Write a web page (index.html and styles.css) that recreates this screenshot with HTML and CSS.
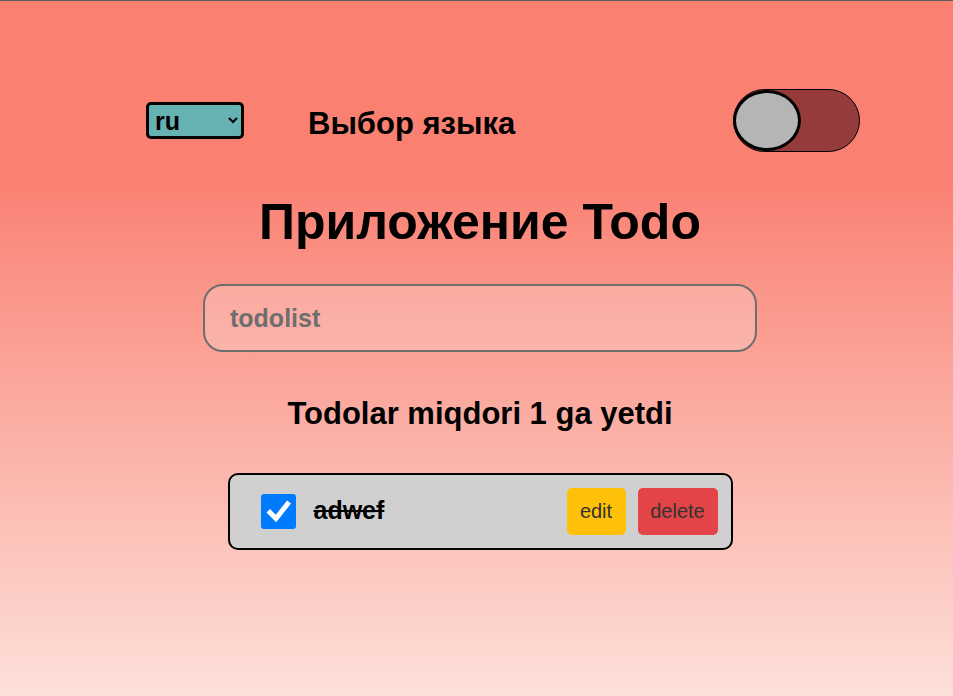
FILE: index.html
```html
<!DOCTYPE html>
<html lang="ru">
<head>
<meta charset="utf-8">
<title>Приложение Todo</title>
<link rel="stylesheet" href="styles.css">
</head>
<body>
<div class="app">
  <header class="header">
    <select class="lang-select">
      <option>ru</option>
      <option>uz</option>
      <option>en</option>
    </select>
    <span class="lang-label">Выбор языка</span>
    <div class="toggle"><span class="knob"></span></div>
  </header>
  <h1 class="title">Приложение Todo</h1>
  <input class="todo-input" type="text" placeholder="todolist">
  <p class="count">Todolar miqdori 1 ga yetdi</p>
  <ul class="todo-list">
    <li class="todo-item">
      <span class="check"><svg viewBox="0 0 35 35" width="35" height="35"><path d="M9 18.5 L15 24.5 L26.5 10" fill="none" stroke="#fff" stroke-width="5" stroke-linecap="square"/></svg></span>
      <span class="todo-text">adwef</span>
      <button class="btn btn-edit">edit</button>
      <button class="btn btn-delete">delete</button>
    </li>
  </ul>
</div>
</body>
</html>
```
FILE: styles.css
```css
html, body {
  margin: 0;
  padding: 0;
}
body {
  min-height: 100vh;
  box-sizing: border-box;
  border-top: 1px solid #5c5c5c;
  background: linear-gradient(180deg, #fa8072 0%, #fa8072 25%, #fde0da 100%);
  font-family: "Liberation Sans", Arial, sans-serif;
  color: #000;
}
.app {
  display: flex;
  flex-direction: column;
  align-items: center;
  padding-left: 7px;
}
.header {
  align-self: stretch;
  display: flex;
  align-items: center;
  height: 63px;
  margin-top: 88px;
  padding: 0 93px 0 139px;
}
.lang-select {
  width: 98px;
  height: 37px;
  box-sizing: border-box;
  border: 3px solid #000;
  border-radius: 5px;
  background-color: #66b2b2;
  font-family: "Liberation Sans", Arial, sans-serif;
  font-weight: bold;
  font-size: 25px;
  color: #000;
  padding: 0 2px;
}
.lang-label {
  margin-left: 64px;
  margin-top: 7px;
  font-size: 31px;
  font-weight: bold;
}
.toggle {
  position: relative;
  margin-left: auto;
  width: 127px;
  height: 63px;
  box-sizing: border-box;
  border: 1px solid #000;
  border-radius: 32px;
  background: #953b3b;
}
.knob {
  position: absolute;
  left: -1px;
  top: 0px;
  width: 68px;
  height: 61px;
  box-sizing: border-box;
  border: 3px solid #000;
  border-radius: 50%;
  background: #b5b5b5;
}
.title {
  margin: 42px 0 0;
  font-size: 50px;
  font-weight: bold;
  line-height: 56px;
}
.todo-input {
  margin-top: 34px;
  width: 554px;
  height: 68px;
  box-sizing: border-box;
  border: 2px solid #6e6e6e;
  border-radius: 20px;
  background: rgba(255, 255, 255, 0.2);
  padding: 0 25px;
  font-family: "Liberation Sans", Arial, sans-serif;
  font-size: 25px;
  font-weight: bold;
  color: #333;
  outline: none;
}
.todo-input::placeholder {
  color: #6e6e6e;
}
.count {
  margin: 45px 0 0;
  font-size: 31px;
  font-weight: bold;
  line-height: 34px;
}
.todo-list {
  list-style: none;
  margin: 42px 0 0;
  padding: 0;
}
.todo-item {
  display: flex;
  align-items: center;
  width: 505px;
  height: 77px;
  box-sizing: border-box;
  border: 2px solid #000;
  border-radius: 10px;
  background: #d0d0d0;
  padding: 0 13px 0 31px;
}
.check {
  display: block;
  width: 35px;
  height: 35px;
  border-radius: 3px;
  background: #007bff;
}
.check svg {
  display: block;
}
.todo-text {
  margin-left: 18px;
  margin-bottom: 3px;
  font-size: 25px;
  font-weight: bold;
  text-decoration: line-through;
  flex: 1;
}
.btn {
  height: 47px;
  border: none;
  border-radius: 5px;
  font-family: "Liberation Sans", Arial, sans-serif;
  font-size: 20px;
  color: #333;
  padding: 0;
}
.btn-edit {
  width: 59px;
  background: #ffc107;
}
.btn-delete {
  width: 80px;
  margin-left: 12px;
  background: #e24447;
}
```
